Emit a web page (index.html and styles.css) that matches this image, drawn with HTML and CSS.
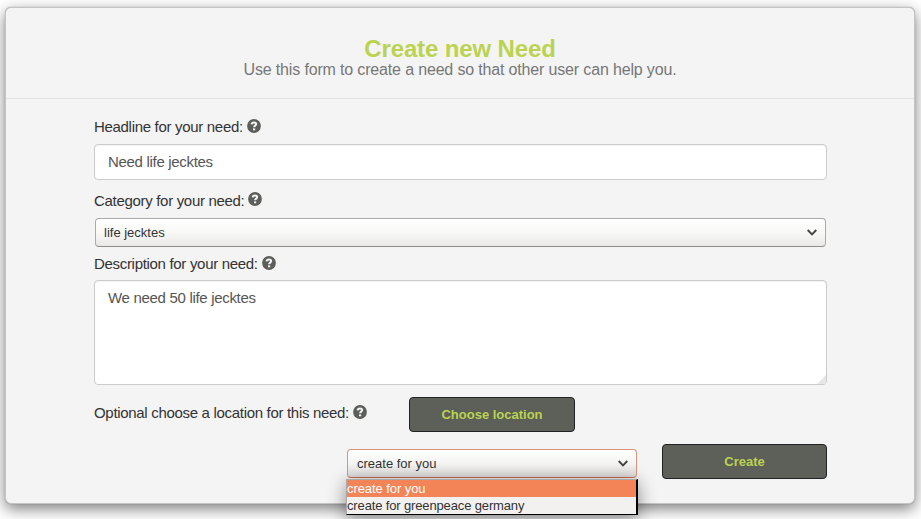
FILE: index.html
```html
<!DOCTYPE html>
<html lang="en">
<head>
<meta charset="utf-8">
<title>Create new Need</title>
<link rel="stylesheet" href="styles.css">
</head>
<body>
<svg class="defs" aria-hidden="true">
  <symbol id="help" viewBox="0 0 14 14">
    <circle cx="7" cy="7" r="6.9" fill="#5c5e59"/>
    <path d="M4.6 5.4C4.8 3.9 5.7 3.4 7 3.4S9.2 4 9.2 5.1C9.2 6.7 7.1 6.6 7.1 8.3" fill="none" stroke="#f4f4f4" stroke-width="2"/>
    <path d="M6 9.4h2.2v1.9H6z" fill="#f4f4f4"/>
  </symbol>
  <symbol id="chevron" viewBox="0 0 10 7">
    <path d="M.7 1l4.3 4.3L9.3 1" fill="none" stroke="#444" stroke-width="1.9"/>
  </symbol>
</svg>
<main class="modal">
  <header class="modal-header">
    <h1><span>Create new Need</span></h1>
    <p><span>Use this form to create a need so that other user can help you.</span></p>
  </header>
  <form class="modal-body">
    <div class="label"><span>Headline for your need:</span><svg class="help"><use href="#help"/></svg></div>
    <div class="field headline"><span>Need life jecktes</span></div>
    <div class="label raised"><span>Category for your need:</span><svg class="help"><use href="#help"/></svg></div>
    <div class="select category"><span>life jecktes</span><svg class="chevron"><use href="#chevron"/></svg></div>
    <div class="label"><span>Description for your need:</span><svg class="help"><use href="#help"/></svg></div>
    <div class="field description"><span>We need 50 life jecktes</span>
      <svg class="grip" viewBox="0 0 9 9"><path d="M9 0v9H0z" fill="#e6e6e6"/></svg>
    </div>
    <div class="row location">
      <div class="label"><span>Optional choose a location for this need:</span><svg class="help"><use href="#help"/></svg></div>
      <button type="button" class="btn choose">Choose location</button>
    </div>
    <div class="row actions">
      <div class="select owner"><span>create for you</span><svg class="chevron"><use href="#chevron"/></svg>
        <div class="menu">
          <div class="option active"><span>create for you</span></div>
          <div class="option"><span>create for greenpeace germany</span></div>
        </div>
      </div>
      <button type="button" class="btn create">Create</button>
    </div>
  </form>
</main>
</body>
</html>
```
FILE: styles.css
```css
* { box-sizing: border-box; }
html, body { height: 519px; overflow: hidden; }
body {
  margin: 0;
  padding: 7px 6px 0 5px;
  background: #fff;
  color: #333;
  font-family: "Liberation Sans", Arial, sans-serif;
}
.defs { position: absolute; width: 0; height: 0; }
.modal {
  height: 497px;
  background: #f4f4f4;
  border: 1px solid #c4c4c4;
  border-radius: 6px;
  box-shadow: 0 0 1px rgba(0, 0, 0, .4), 0 5px 15px rgba(0, 0, 0, .5);
}
.modal-header {
  height: 91px;
  padding-top: 27px;
  border-bottom: 1px solid #e2e2e2;
  text-align: center;
}
h1 { margin: 0; color: #bbd351; font-size: 24px; line-height: 28px; font-weight: bold; letter-spacing: -.13px; }
p { margin: 0; color: #777; font-size: 16px; line-height: 14px; letter-spacing: -.16px; }
.modal-body { padding: 18px 87px 0 88px; }
.label { display: flex; align-items: center; height: 20px; gap: 4px; font-size: 15px; line-height: 20px; letter-spacing: -.31px; white-space: nowrap; }
.help { width: 14px; height: 14px; flex: none; margin-top: -2px; }
.raised .help { margin-top: -4px; }
.field {
  position: relative;
  background: #fff;
  border: 1px solid #ccc;
  border-radius: 4px;
  padding: 0 13px;
  color: #555;
  font-size: 15px;
  letter-spacing: -.31px;
  box-shadow: inset 0 1px 1px rgba(0, 0, 0, .05);
}
.headline { height: 36px; margin: 7px 0 11px; line-height: 34px; }
.select {
  position: relative;
  display: flex;
  align-items: center;
  justify-content: space-between;
  height: 29px;
  border: 1px solid #aaa;
  border-bottom-color: #8e8e8e;
  border-radius: 4px;
  background: linear-gradient(#fff, #f8f8f7 50%, #e9e8e6);
  padding: 0 8px;
  font-size: 13px;
}
.chevron { width: 10px; height: 7px; }
.category { margin: 7px 1px; }
.description { height: 105px; margin: 6px 0 12px; padding-top: 7px; line-height: 20px; }
.grip { position: absolute; right: 0; bottom: 0; width: 9px; height: 9px; }
.row { display: flex; }
.location { height: 47px; }
.location .label { width: 315px; margin-top: 6px; }
.btn {
  height: 35px;
  padding: 0;
  border: 1px solid #222;
  border-radius: 4px;
  background: #5d5f59;
  color: #bbd351;
  font: bold 13px "Liberation Sans", Arial, sans-serif;
}
.choose { width: 166px; }
.create { width: 165px; }
.actions { justify-content: flex-end; gap: 25px; }
.owner { width: 290px; margin-top: 5px; padding: 0 8px 0 9px; border-color: #da937b; border-bottom-color: #c86d50; background: linear-gradient(#fff, #f4f4f3 50%, #dddcda); }
.menu {
  position: absolute;
  top: 29px;
  left: -2px;
  width: 292px;
  height: 36px;
  border: 1px solid #aaa;
  border-right: 2px solid #000;
  border-bottom-color: #000;
  background: #f2f1f0;
  box-shadow: 0 4px 18px rgba(0, 0, 0, .45);
}
.option { height: 17px; line-height: 17px; letter-spacing: -.14px; white-space: nowrap; }
.active { letter-spacing: -.07px; background: #f38457; color: #fff; }
```
